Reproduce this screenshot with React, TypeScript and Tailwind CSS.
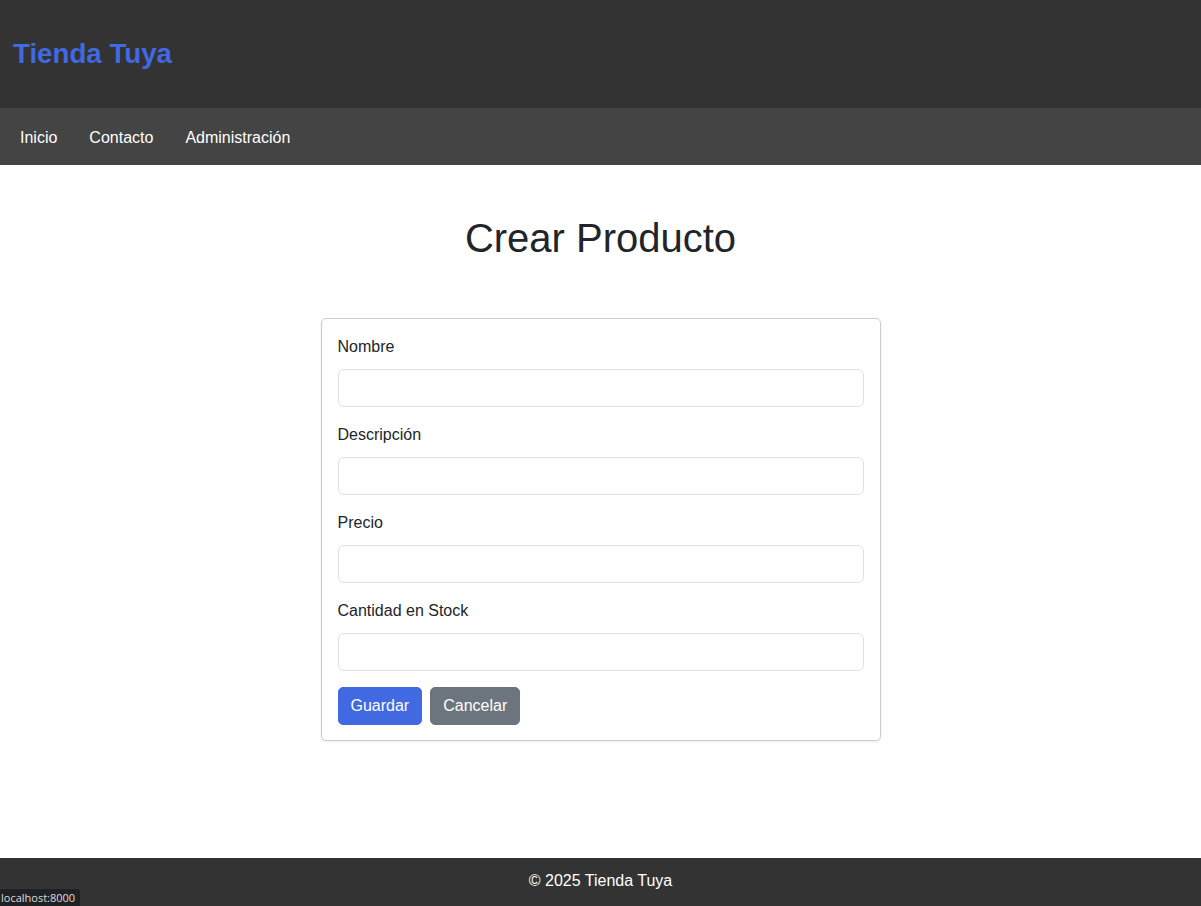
import React from "react";

const fields = ["Nombre", "Descripción", "Precio", "Cantidad en Stock"];

export default function App() {
  return (
    <div
      className="relative flex min-h-[906px] flex-col bg-white text-[16px] text-[#212529]"
      style={{ fontFamily: '"Liberation Sans", Arial, sans-serif' }}
    >
      <header className="flex h-[108px] items-center bg-[#333333] px-[13px]">
        <h1 className="m-0 text-[27.7px] font-bold leading-none text-[#4169e1]">Tienda Tuya</h1>
      </header>
      <nav className="flex h-[57px] items-center gap-[32px] bg-[#444444] px-[20px] pt-[2px] text-white">
        <a className="leading-none">Inicio</a>
        <a className="leading-none">Contacto</a>
        <a className="leading-none">Administración</a>
      </nav>
      <main className="flex flex-1 flex-col items-center pt-[49px]">
        <h2 className="m-0 text-[40px] font-normal leading-[48px] text-[#212529]">Crear Producto</h2>
        <form className="mt-[56px] w-[560px] rounded-[5px] border border-[#cccccc] bg-white px-4 pb-[15px] pt-4 shadow-[0_1px_3px_rgba(0,0,0,0.08)]">
          {fields.map((f) => (
            <div key={f} className="mb-4">
              <label className="mb-[10px] block leading-6">{f}</label>
              <input className="block h-[38px] w-full rounded-[6px] border border-[#dee2e6] bg-white px-3 outline-none" />
            </div>
          ))}
          <div className="flex gap-[8px]">
            <button
              type="button"
              className="h-[38px] rounded-[5px] border border-[#4169e1] bg-[#4169e1] px-3 leading-6 text-white"
            >
              Guardar
            </button>
            <button
              type="button"
              className="h-[38px] rounded-[5px] border border-[#6c757d] bg-[#6c757d] px-3 leading-6 text-white"
            >
              Cancelar
            </button>
          </div>
        </form>
      </main>
      <footer className="flex h-[48px] items-center justify-center bg-[#333333] pb-[2px] text-white">
        © 2025 Tienda Tuya
      </footer>
      <div
        className="absolute bottom-0 left-0 flex h-[17px] items-center rounded-tr-[3px] bg-[#202124] pl-[1px] pr-[5px] text-[11px] leading-none text-[#dddddd]"
        style={{ fontFamily: '"Open Sans", "DejaVu Sans", sans-serif' }}
      >
        localhost:8000
      </div>
    </div>
  );
}
